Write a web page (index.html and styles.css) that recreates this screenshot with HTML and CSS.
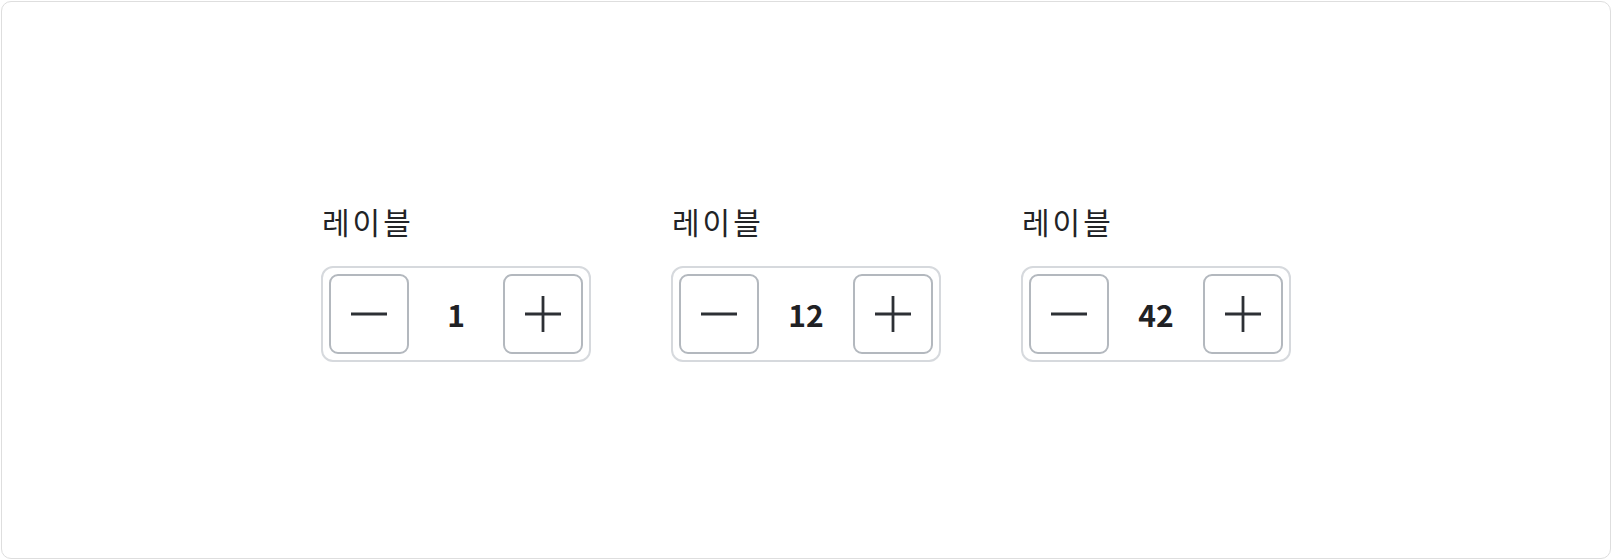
FILE: index.html
```html
<!DOCTYPE html>
<html lang="ko">
<head>
<meta charset="utf-8">
<link rel="stylesheet" href="styles.css">
</head>
<body>
<div class="frame">
  <div class="row">
    <div class="field">
      <div class="label">레이블</div>
      <div class="stepper">
        <button class="btn" aria-label="감소"><svg width="40" height="40" viewBox="0 0 40 40"><line x1="2" y1="20" x2="38" y2="20" /></svg></button>
        <div class="value">1</div>
        <button class="btn" aria-label="증가"><svg width="40" height="40" viewBox="0 0 40 40"><line x1="2" y1="20" x2="38" y2="20" /><line x1="20" y1="2" x2="20" y2="38" /></svg></button>
      </div>
    </div>
    <div class="field">
      <div class="label">레이블</div>
      <div class="stepper">
        <button class="btn" aria-label="감소"><svg width="40" height="40" viewBox="0 0 40 40"><line x1="2" y1="20" x2="38" y2="20" /></svg></button>
        <div class="value">12</div>
        <button class="btn" aria-label="증가"><svg width="40" height="40" viewBox="0 0 40 40"><line x1="2" y1="20" x2="38" y2="20" /><line x1="20" y1="2" x2="20" y2="38" /></svg></button>
      </div>
    </div>
    <div class="field">
      <div class="label">레이블</div>
      <div class="stepper">
        <button class="btn" aria-label="감소"><svg width="40" height="40" viewBox="0 0 40 40"><line x1="2" y1="20" x2="38" y2="20" /></svg></button>
        <div class="value">42</div>
        <button class="btn" aria-label="증가"><svg width="40" height="40" viewBox="0 0 40 40"><line x1="2" y1="20" x2="38" y2="20" /><line x1="20" y1="2" x2="20" y2="38" /></svg></button>
      </div>
    </div>
  </div>
</div>
</body>
</html>
```
FILE: styles.css
```css
html, body {
  margin: 0;
  padding: 0;
  background: #ffffff;
}
body {
  font-family: "Noto Sans CJK KR", "Noto Sans", sans-serif;
  color: #222326;
}
.frame {
  margin: 1px;
  height: 558px;
  box-sizing: border-box;
  border: 1px solid #dedede;
  border-radius: 10px;
  display: flex;
  align-items: center;
  justify-content: center;
}
.row {
  display: flex;
  gap: 80px;
}
.field {
  display: flex;
  flex-direction: column;
  gap: 24px;
}
.label {
  font-size: 30px;
  line-height: 42px;
  letter-spacing: 3px;
  padding-top: 2px;
  padding-left: 1px;
}
.stepper {
  display: flex;
  align-items: center;
  width: 270px;
  box-sizing: border-box;
  border: 2px solid #d6d9dd;
  border-radius: 12px;
  padding: 6px;
}
.btn {
  width: 80px;
  height: 80px;
  box-sizing: border-box;
  border: 2px solid #b3b8be;
  border-radius: 9px;
  background: #ffffff;
  padding: 0;
  display: flex;
  align-items: center;
  justify-content: center;
}
.btn svg line {
  stroke: #2d3035;
  stroke-width: 2.8;
}
.value {
  flex: 1;
  text-align: center;
  font-size: 30px;
  font-weight: 700;
  line-height: 40px;
  color: #202124;
}
```
